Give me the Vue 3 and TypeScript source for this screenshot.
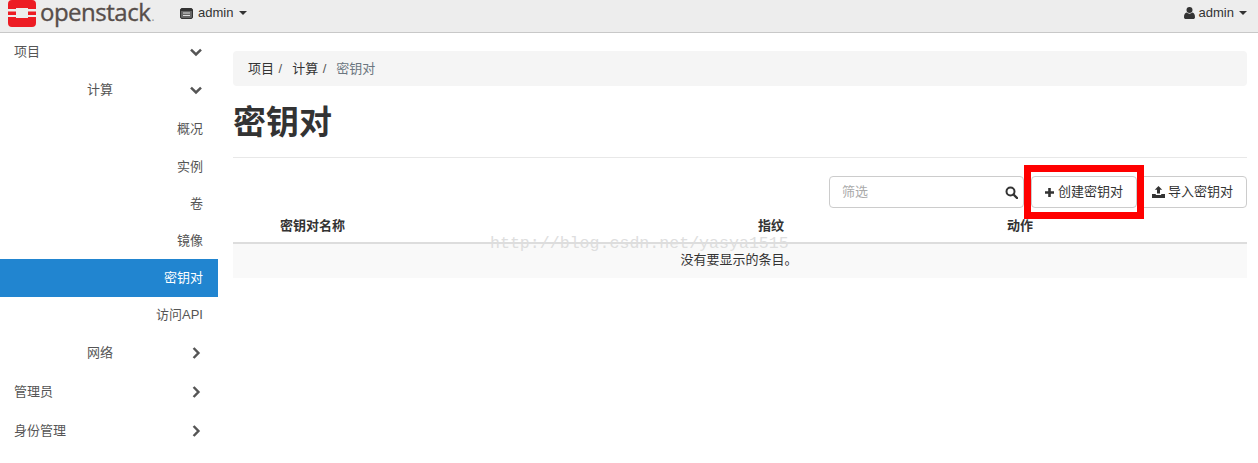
<script setup lang="ts">
interface NavItem { label: string; level: number; icon?: 'down' | 'right'; active?: boolean }
const nav: NavItem[] = [
  { label: '项目', level: 1, icon: 'down' },
  { label: '计算', level: 2, icon: 'down' },
  { label: '概况', level: 3 },
  { label: '实例', level: 3 },
  { label: '卷', level: 3 },
  { label: '镜像', level: 3 },
  { label: '密钥对', level: 3, active: true },
  { label: '访问API', level: 3 },
  { label: '网络', level: 2, icon: 'right' },
  { label: '管理员', level: 1, icon: 'right' },
  { label: '身份管理', level: 1, icon: 'right' },
]
</script>

<template>
  <div class="page">
    <header class="topbar">
      <div class="brand">
        <svg class="logo" width="28" height="27" viewBox="0 0 28 27">
          <path fill="#ed1c24" d="M4 0H24a4 4 0 0 1 4 4V9H20V8H8V9H0V4a4 4 0 0 1 4-4ZM0 11.500H8V15H0ZM20 11.500H28V15H20ZM0 17H8V18H20V17H28V23a4 4 0 0 1-4 4H4a4 4 0 0 1-4-4Z" />
        </svg>
        <span class="wordmark">openstack<i>.</i></span>
      </div>
      <div class="project">
        <svg width="13" height="11" viewBox="0 0 13 11">
          <rect x="0.500" y="0.500" width="12" height="10" rx="1.500" fill="#666" stroke="#333" />
          <path d="M1 2h11" stroke="#333" stroke-width="2" />
          <path d="M3 5h7M3 7.500h7" stroke="#ddd" stroke-width="1" />
        </svg>
        <span>admin</span>
        <i class="caret"></i>
      </div>
      <div class="user">
        <svg width="11" height="12" viewBox="0 0 11 12">
          <circle cx="5.500" cy="3" r="3" fill="#333" />
          <path fill="#333" d="M0 10.200C0 7.600 1 6 2.600 5.600c.8.700 1.800 1.100 2.900 1.100s2.100-.4 2.900-1.100C10 6 11 7.600 11 10.200c0 1.100-.8 1.800-1.800 1.800H1.800C.8 12 0 11.300 0 10.200Z" />
        </svg>
        <span>admin</span>
        <i class="caret"></i>
      </div>
    </header>

    <div class="body">
      <aside class="sidebar">
        <div
          v-for="item in nav"
          :key="item.label"
          class="nav-item"
          :class="['level-' + item.level, { active: item.active }]"
        >
          <span>{{ item.label }}</span>
          <svg v-if="item.icon" class="chev" width="12" height="12" viewBox="0 0 12 12">
            <path
              v-if="item.icon === 'down'"
              d="M1 3.600 6 8.400 11 3.600"
              fill="none"
              stroke="#555"
              stroke-width="2.500"
            />
            <path v-else d="M3.600 1 8.400 6 3.600 11" fill="none" stroke="#555" stroke-width="2.500" />
          </svg>
        </div>
      </aside>

      <main class="main">
        <nav class="crumbs">
          <span>项目</span><em>/</em>
          <span>计算</span><em>/</em>
          <span class="current">密钥对</span>
        </nav>
        <h1 class="title">密钥对</h1>
        <div class="toolbar">
          <div class="search">
            <span>筛选</span>
            <svg width="13" height="13" viewBox="0 0 13 13">
              <circle cx="5.500" cy="5.500" r="4" fill="none" stroke="#333" stroke-width="2" />
              <path d="M8.500 8.500 12 12" stroke="#333" stroke-width="2.400" stroke-linecap="round" />
            </svg>
          </div>
          <button class="btn create" type="button">
            <svg width="11" height="11" viewBox="0 0 11 11">
              <path d="M5.500 1v9M1 5.500h9" stroke="#333" stroke-width="2.600" />
            </svg>
            创建密钥对
            <span class="mark"></span>
          </button>
          <button class="btn" type="button">
            <svg width="13" height="12" viewBox="0 0 13 12">
              <path fill="#333" d="M6.500 0 10.200 3.800H8V7.600H5V3.800H2.800ZM0 8H3.800V9H9.200V8H13V12H0Z" />
            </svg>
            导入密钥对
          </button>
        </div>
        <div class="table">
          <div class="thead">
            <span>密钥对名称</span>
            <span>指纹</span>
            <span>动作</span>
          </div>
          <div class="empty">没有要显示的条目。</div>
          <span class="watermark">http://blog.csdn.net/yasya1515</span>
        </div>
      </main>
    </div>
  </div>
</template>

<style>
html, body { margin: 0; background: #fff; overflow: hidden; }
</style>

<style scoped>
.page {
  width: 1258px;
  height: 463px;
  overflow: hidden;
  font: 13px/18px "Liberation Sans", "Noto Sans CJK SC", sans-serif;
  color: #333;
}
.topbar {
  box-sizing: border-box;
  height: 33px;
  padding-bottom: 5px;
  display: flex;
  align-items: center;
  background: #ededed;
  border-bottom: 1px solid #c8c8c8;
}
.brand { display: flex; align-items: center; padding-left: 8px; width: 172px; }
.logo { flex: none; }
.wordmark {
  margin-left: 4px;
  font: 400 24px/24px "Open Sans", sans-serif;
  letter-spacing: -0.5px;
  -webkit-text-stroke: 0.35px #574e4a;
  color: #574e4a;
}
.wordmark i { margin-left: 1px; font-style: normal; color: #999; font-size: 13px; -webkit-text-stroke: 0; }
.project, .user { display: flex; align-items: center; gap: 4px; }
.project { gap: 5px; margin-top: -1px; }
.user { margin-left: auto; padding-right: 11px; margin-top: -1px; }
.caret {
  width: 0;
  height: 0;
  margin-left: 1px;
  border-top: 4px solid #333;
  border-left: 4px solid transparent;
  border-right: 4px solid transparent;
}
.body { display: flex; }
.sidebar { width: 218px; flex: none; }
.nav-item {
  position: relative;
  display: flex;
  align-items: center;
  height: 37px;
  color: #555;
}
.level-1, .level-2 { height: 39px; }
.level-1 { padding-left: 14px; }
.level-2 { padding-left: 87px; }
.level-3 { justify-content: flex-end; padding-right: 15px; }
.nav-item:nth-child(1) { height: 37px; }
.nav-item:nth-child(2) { height: 38px; padding-top: 1px; }
.nav-item:nth-child(3) { height: 39px; }
.nav-item:nth-child(7) { height: 38px; }
.nav-item:nth-child(8) { height: 36px; }
.chev { position: absolute; left: 190px; top: 50%; margin-top: -6px; }
.active { background: #2185d0; color: #fff; }
.main { flex: 1; padding: 18px 11px 0 15px; min-width: 0; }
.crumbs {
  display: flex;
  align-items: center;
  height: 35px;
  padding-left: 15px;
  background: #f5f5f5;
  border-radius: 4px;
}
.crumbs em { font-style: normal; margin: 0 10px 0 4.500px; color: #555; }
.current { color: #6b7680; }
.title {
  margin: 0;
  padding: 17px 0 14px;
  border-bottom: 1px solid #e8e8e8;
  font-size: 33px;
  line-height: 40px;
  font-weight: 700;
  color: #333;
}
.toolbar {
  display: flex;
  justify-content: flex-end;
  align-items: center;
  margin-top: 18px;
}
.search {
  box-sizing: border-box;
  width: 195px;
  height: 32px;
  margin-right: 7px;
  display: flex;
  align-items: center;
  justify-content: space-between;
  padding: 0 5px 0 12px;
  border: 1px solid #ccc;
  border-radius: 4px;
  color: #aaa;
}
.btn {
  position: relative;
  box-sizing: border-box;
  height: 32px;
  padding: 0 13px 0 12px;
  display: flex;
  align-items: center;
  gap: 3px;
  background: #fff;
  border: 1px solid #ccc;
  border-radius: 4px;
  font: inherit;
  color: #333;
}
.create { margin-right: 2px; }
.mark {
  position: absolute;
  z-index: 1;
  left: -8px;
  right: -8px;
  top: -12px;
  bottom: -12px;
  border: 7px solid #f00;
}
.table { position: relative; }
.thead {
  display: grid;
  grid-template-columns: 478px 249px 1fr;
  padding: 9px 0 7px 47px;
  border-bottom: 2px solid #ddd;
  font-weight: 700;
}
.empty {
  height: 34px;
  line-height: 32px;
  text-align: center;
  background: #f9f9f9;
  padding-right: 2px;
}
.watermark {
  position: absolute;
  left: 257px;
  top: 26px;
  font: 16.600px/20px "Liberation Mono", monospace;
  color: #dedede;
  pointer-events: none;
}
</style>
